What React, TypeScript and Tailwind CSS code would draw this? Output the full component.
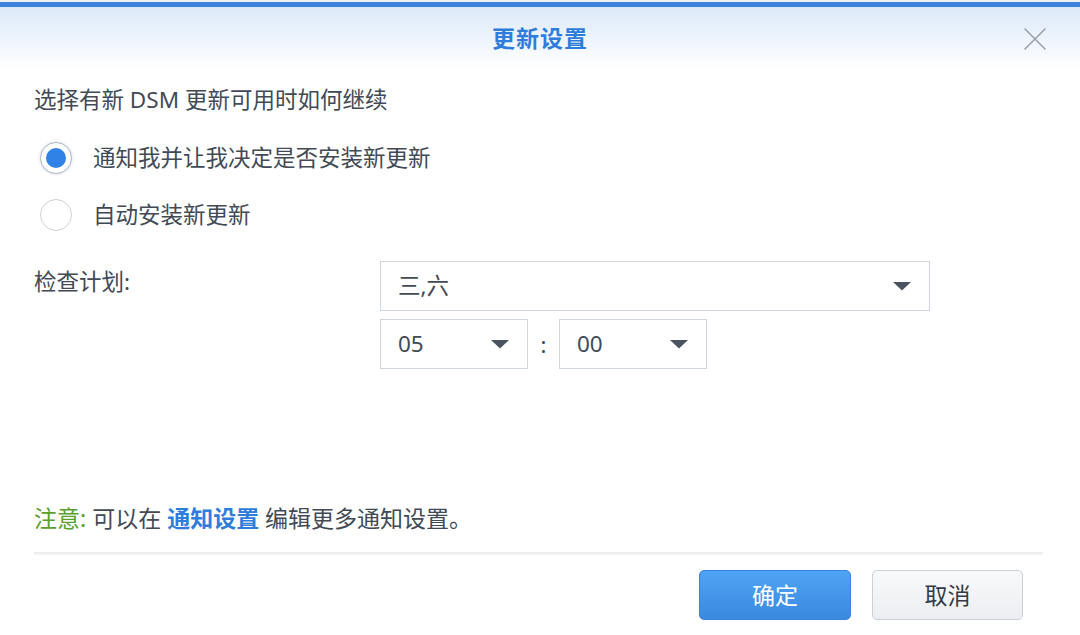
import React, { useState } from 'react';

const FONT = '"Noto Sans", "Noto Sans CJK SC", sans-serif';

// small caret used by the select boxes
const Caret = () => (
  <svg width="20" height="10" viewBox="0 0 20 10" className="shrink-0">
    <path d="M1 1 L19 1 L10 9.5 Z" fill="#4b5361" />
  </svg>
);

const SelectBox = ({ value, width }: { value: string; width: string }) => (
  <div
    className={`${width} h-[50px] border border-[#cfd5dc] bg-white flex items-center justify-between pl-[17px] pr-[17px] text-[22.5px] text-[#414a55]`}
  >
    <span>{value}</span>
    <Caret />
  </div>
);

const Radio = ({ checked, label, onClick }: { checked: boolean; label: string; onClick: () => void }) => (
  <div className="flex items-center h-[40px] cursor-pointer" onClick={onClick}>
    <div
      className={`ml-[6px] w-[32px] h-[32px] rounded-full border-[1.5px] flex items-center justify-center bg-white ${
        checked ? 'border-[#aeb9c8] shadow-[0_0_3px_rgba(120,140,170,0.35)]' : 'border-[#cdd2d9]'
      }`}
    >
      {checked && <div className="w-[20px] h-[20px] rounded-full bg-[#2f82e6]" />}
    </div>
    <span className="ml-[21px] text-[22.5px] text-[#414a55] leading-[24px]">{label}</span>
  </div>
);

export default function App() {
  const [mode, setMode] = useState<'notify' | 'auto'>('notify');

  return (
    <div className="w-[1080px] h-[635px] bg-white overflow-hidden" style={{ fontFamily: FONT }}>
      {/* background window peeking above the dialog */}
      <div className="h-[2px] bg-[#eef0f2]" />
      <div className="h-[5px] bg-[#3b82dc]" />

      {/* header */}
      <div className="relative h-[63px] bg-gradient-to-b from-[#dce9f8] to-white flex items-center justify-center">
        <span className="text-[23px] font-bold text-[#2f7ddb] tracking-[1px]">更新设置</span>
        <svg
          width="24"
          height="24"
          viewBox="0 0 24 24"
          className="absolute right-[33px] top-[20px]"
        >
          <path d="M2 2 L22 22 M22 2 L2 22" stroke="#9aa1aa" strokeWidth="1.6" strokeLinecap="round" />
        </svg>
      </div>

      {/* body */}
      <div className="px-[34px]">
        <div className="pt-[18px] text-[22.5px] leading-[24px] text-[#414a55]">
          选择有新 DSM 更新可用时如何继续
        </div>

        <div className="mt-[26px]">
          <Radio checked={mode === 'notify'} label="通知我并让我决定是否安装新更新" onClick={() => setMode('notify')} />
        </div>
        <div className="mt-[17px]">
          <Radio checked={mode === 'auto'} label="自动安装新更新" onClick={() => setMode('auto')} />
        </div>

        <div className="mt-[26px] flex">
          <div className="w-[346px] pt-[9px] text-[22.5px] leading-[24px] text-[#414a55]">检查计划:</div>
          <div className="flex flex-col gap-[8px]">
            <SelectBox value="三,六" width="w-[550px]" />
            <div className="flex items-center">
              <SelectBox value="05" width="w-[148px]" />
              <span className="w-[31px] text-center text-[22px] text-[#414a55]">:</span>
              <SelectBox value="00" width="w-[148px]" />
            </div>
          </div>
        </div>

        <div className="mt-[137px] text-[23px] leading-[24px] text-[#414a55]">
          <span className="text-[#5aa02c]">注意:</span> 可以在{' '}
          <span className="font-bold text-[#2f7ddb]">通知设置</span> 编辑更多通知设置。
        </div>

        <div className="mt-[22px] mr-[3px] h-[3px] bg-gradient-to-b from-[#e9eaec] to-[#f6f7f8]" />

        <div className="mt-[15px] flex justify-end gap-[21px] pr-[23px]">
          <button className="w-[152px] h-[50px] rounded-[5px] bg-gradient-to-b from-[#4fa3f4] to-[#3a89e0] border border-[#3a83d6] text-white text-[23px]">
            确定
          </button>
          <button className="w-[151px] h-[50px] rounded-[5px] bg-gradient-to-b from-[#f8f9fb] to-[#eceef1] border border-[#cbd0d6] text-[#333a44] text-[23px]">
            取消
          </button>
        </div>
      </div>
    </div>
  );
}
